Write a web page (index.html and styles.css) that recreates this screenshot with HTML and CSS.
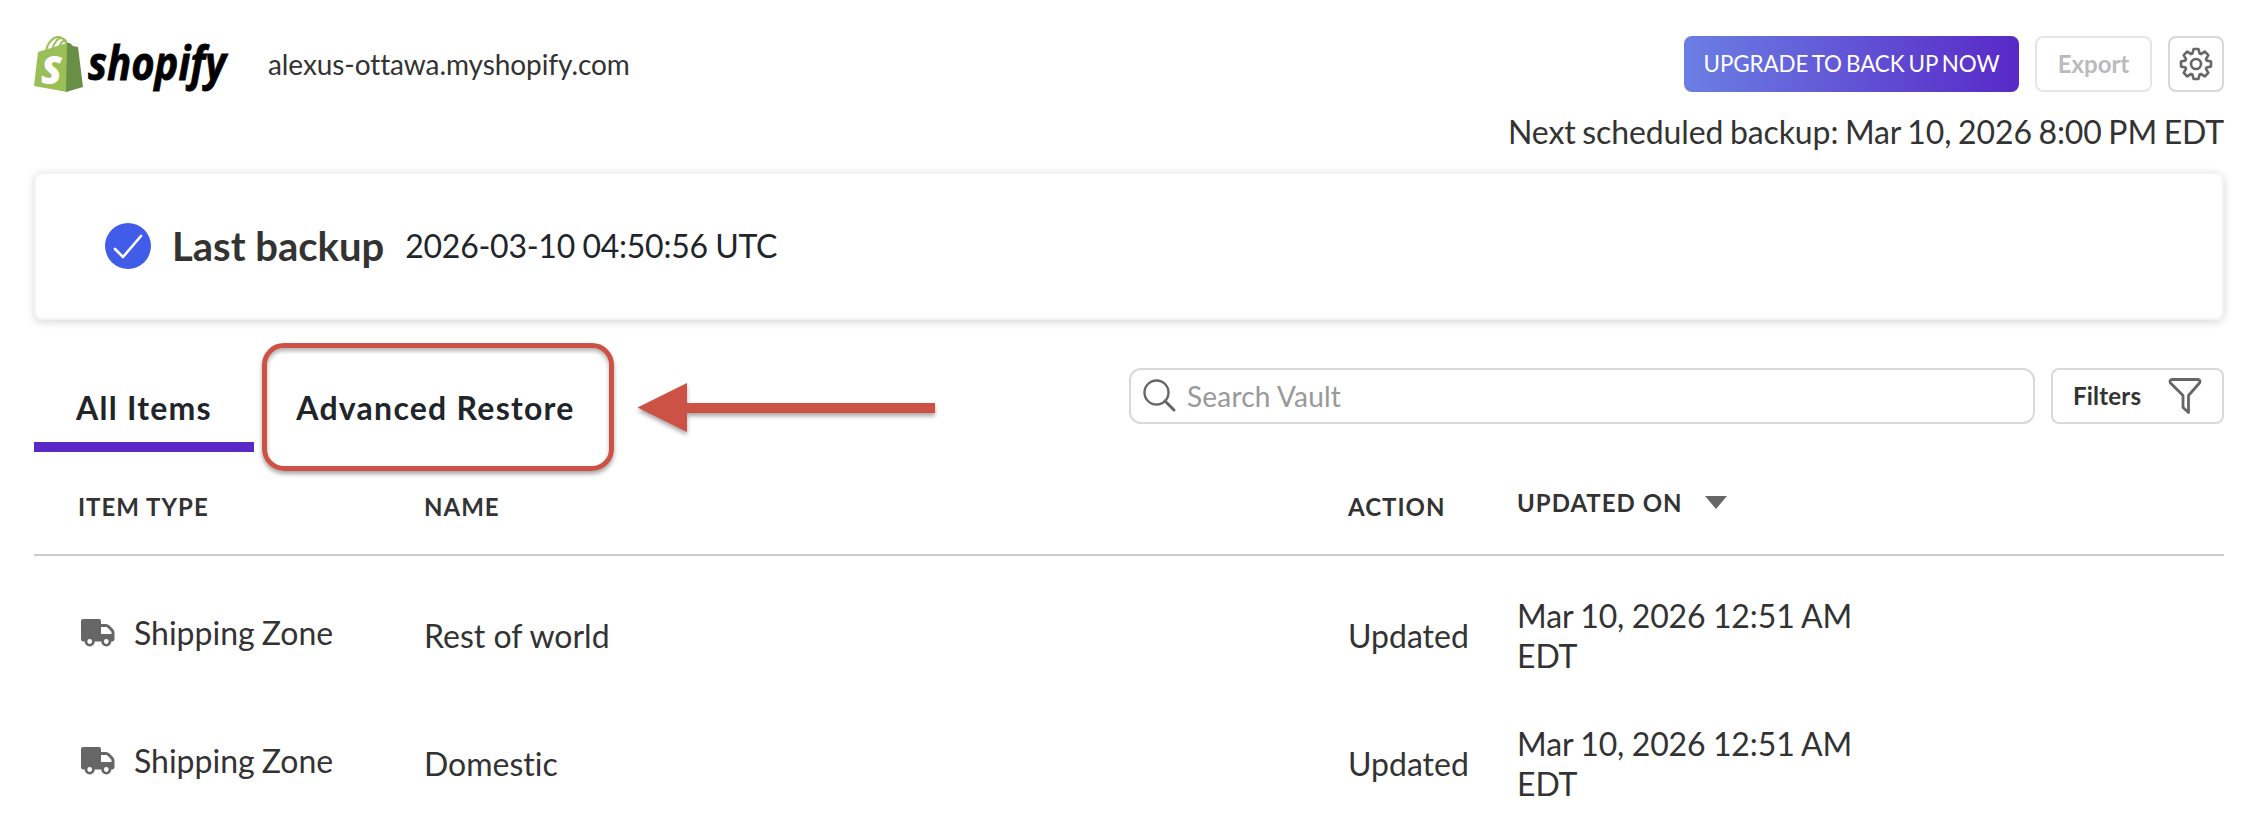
FILE: index.html
```html
<!DOCTYPE html>
<html lang="en">
<head>
	<meta charset="UTF-8">
	<title>Shopify Vault</title>
	<link rel="stylesheet" href="styles.css">
</head>
<body>
	<div class="header">
		<svg class="logo" width="196" height="60" viewBox="0 0 196 60">
			<path d="M12 18 C13 8 20 3 24 3 C29 3 32 8 33 12 M18 16 C19 10 24 4 27 4 C32 5 33 9 33 12 M25 14 C26 10 28 7 31 6" fill="none" stroke="#9abf56" stroke-width="2"/>
			<path d="M4 18 L33 9 V58 L0 52 Z" fill="#9abf56"/>
			<path d="M33 9 L36 9 L39 12 L44 13 L49 53 L32 58 Z" fill="#698f47"/>
			<text class="logo-s" x="7" y="50">S</text>
			<text class="logo-text" x="54" y="46" textLength="138" lengthAdjust="spacingAndGlyphs">shopify</text>
		</svg>
		<span class="domain">alexus-ottawa.myshopify.com</span>
		<div class="actions">
			<button class="btn upgrade">UPGRADE TO BACK UP NOW</button>
			<button class="btn export" disabled>Export</button>
			<button class="btn settings">
				<svg width="34" height="34" viewBox="0 0 34 34" fill="none" stroke="#666" stroke-width="2.6" stroke-linejoin="round">
					<path d="M14.6 2 L19.4 2 L20.6 6.5 L21.9 7 L25.9 4.7 L29.3 8.1 L27 12.1 L27.5 13.4 L32 14.6 L32 19.4 L27.5 20.6 L27 21.9 L29.3 25.9 L25.9 29.3 L21.9 27 L20.6 27.5 L19.4 32 L14.6 32 L13.4 27.5 L12.1 27 L8.1 29.3 L4.7 25.9 L7 21.9 L6.5 20.6 L2 19.4 L2 14.6 L6.5 13.4 L7 12.1 L4.7 8.1 L8.1 4.7 L12.1 7 L13.4 6.5 Z"/>
					<circle cx="17" cy="17" r="5"/>
				</svg>
			</button>
		</div>
	</div>
	<p class="next-backup">Next scheduled backup: Mar 10, 2026 8:00 PM EDT</p>

	<div class="card">
		<svg width="46" height="46" viewBox="0 0 46 46">
			<circle cx="23" cy="23" r="23" fill="#425cea"/>
			<path d="M10 26 L18 34 L36 13" fill="none" stroke="#fff" stroke-width="2.6" stroke-linecap="round" stroke-linejoin="round"/>
		</svg>
		<h2>Last backup</h2>
		<span class="date">2026-03-10 04:50:56 UTC</span>
	</div>

	<div class="toolbar">
		<div class="tabs">
			<a class="tab on">All Items</a>
			<a class="tab restore">Advanced Restore</a>
			<svg class="arrow" width="310" height="60" viewBox="0 0 310 60">
				<path d="M7.5 29.5 L57 5 V25 H305 V35 H57 V54 Z" fill="#cd5246"/>
			</svg>
		</div>
		<div class="search">
			<svg width="34" height="34" viewBox="0 0 34 34" fill="none" stroke="#666">
				<circle cx="13.5" cy="13.5" r="12" stroke-width="2.4"/>
				<path d="M22 22 L31 31" stroke-width="3" stroke-linecap="round"/>
			</svg>
			<span>Search Vault</span>
		</div>
		<button class="btn filters">
			<span>Filters</span>
			<svg width="34" height="38" viewBox="0 0 34 38" fill="none" stroke="#666" stroke-width="2.8" stroke-linejoin="round">
				<path d="M4 2.5 H30 Q33 3 31.5 6 L20.5 18.5 V35.5 L15 30.5 V18.5 L2.5 6 Q1 3 4 2.5 Z"/>
			</svg>
		</button>
	</div>

	<div class="row head">
		<span>ITEM TYPE</span>
		<span>NAME</span>
		<span>ACTION</span>
		<span class="sorted">UPDATED ON <i class="caret"></i></span>
	</div>
	<div class="row">
		<span class="type">
			<svg width="34" height="28" viewBox="0 0 34 28">
				<path d="M2 0 H18 Q20 0 20 2 V5 H25 Q27 5 28.5 6.5 L32 10 Q33.5 11.5 33.5 13.5 V20 Q33.5 22 31.5 22.5 H2 Q0 22 0 20 V2 Q0 0 2 0 Z" fill="#666"/>
				<path d="M20 8 H25 Q26 8 27 9 L30.5 13 V15 H20 Z" fill="#fff"/>
				<circle cx="8.7" cy="22.5" r="3.7" fill="#fff" stroke="#666" stroke-width="2.6"/>
				<circle cx="25.3" cy="22.5" r="3.7" fill="#fff" stroke="#666" stroke-width="2.6"/>
			</svg>
			Shipping Zone
		</span>
		<span>Rest of world</span>
		<span>Updated</span>
		<span class="time">Mar 10, 2026 12:51 AM<br>EDT</span>
	</div>
	<div class="row">
		<span class="type">
			<svg width="34" height="28" viewBox="0 0 34 28">
				<path d="M2 0 H18 Q20 0 20 2 V5 H25 Q27 5 28.5 6.5 L32 10 Q33.5 11.5 33.5 13.5 V20 Q33.5 22 31.5 22.5 H2 Q0 22 0 20 V2 Q0 0 2 0 Z" fill="#666"/>
				<path d="M20 8 H25 Q26 8 27 9 L30.5 13 V15 H20 Z" fill="#fff"/>
				<circle cx="8.7" cy="22.5" r="3.7" fill="#fff" stroke="#666" stroke-width="2.6"/>
				<circle cx="25.3" cy="22.5" r="3.7" fill="#fff" stroke="#666" stroke-width="2.6"/>
			</svg>
			Shipping Zone
		</span>
		<span>Domestic</span>
		<span>Updated</span>
		<span class="time">Mar 10, 2026 12:51 AM<br>EDT</span>
	</div>
</body>
</html>
```

FILE: styles.css
```css
*{box-sizing:border-box;}
body,h2,p{margin:0;padding:0;}
body{height:834px;padding:36px 36px 0 34px;overflow:hidden;background:#fff;color:#333;font:32px/40px Lato,sans-serif;font-variant-ligatures:none;}
svg{display:block;flex:none;overflow:visible;}
.btn{height:56px;padding:0;border:2px solid #d9d9d9;border-radius:8px;background:#fff;color:#333;font:bold 24px/30px Lato,sans-serif;}

.header{display:flex;align-items:center;height:56px;}
.logo-text{font:italic bold 46px/50px "Open Sans",sans-serif;fill:#000;stroke:#000;stroke-width:.8px;}
.logo-s{font:italic 800 38px/40px "Open Sans",sans-serif;fill:#fff;}
.domain{margin-left:38px;font-size:28px;letter-spacing:-.08px;}
.actions{display:flex;gap:16px;margin-left:auto;}
.upgrade{width:335px;border:0;background:linear-gradient(90deg,#6b7fe3,#5829c7);color:#fff;font-size:22.4px;font-weight:normal;letter-spacing:-.1px;word-spacing:-1.5px;}
.export{width:117px;border-color:#e5e5e5;color:#bbb;}
.settings{display:flex;align-items:center;justify-content:center;width:56px;}
.next-backup{margin-top:20px;text-align:right;letter-spacing:-.1px;word-spacing:-1.5px;}

.card{display:flex;align-items:center;height:148px;margin-top:20px;padding-left:69px;border:2px solid #f3f3f3;border-radius:8px;box-shadow:0 2px 8px rgba(0,0,0,.16);}
.card h2{margin-left:21px;font-size:40px;}
.card .date{margin-left:21px;color:#212529;letter-spacing:-.25px;word-spacing:-.5px;}

.toolbar{display:flex;height:128px;margin-top:23px;}
.tabs{display:flex;width:1095px;}
.tab{color:#212529;font-weight:bold;letter-spacing:1.25px;}
.tab.on{width:220px;height:109px;padding-top:45px;border-bottom:10px solid #5829c7;text-align:center;}
.tab.restore{width:352px;margin-left:8px;padding:40px 5px 0 0;border:5px solid #cd5246;border-radius:22px;text-align:center;box-shadow:0 3px 4px rgba(0,0,0,.35),inset 0 3px 4px rgba(0,0,0,.3);}
.arrow{margin:35px 0 0 16px;filter:drop-shadow(0 3px 2px rgba(0,0,0,.35));}
.search{display:flex;align-items:center;width:906px;height:56px;margin-top:25px;padding-left:12px;border:2px solid #d9d9d9;border-radius:12px;color:#999;font-size:28px;letter-spacing:.2px;}
.search span{margin-left:10px;}
.filters{display:flex;align-items:center;justify-content:space-between;width:173px;margin:25px 0 0 16px;padding:0 20px;letter-spacing:.2px;}

.row{display:grid;grid-template-columns:346px 924px 169px 1fr;align-items:center;height:128px;padding:0 0 0 44px;}
.head{height:85px;margin-bottom:16px;padding-bottom:12px;border-bottom:2px solid #ccc;font-size:24px;font-weight:bold;letter-spacing:1px;}
.sorted{display:flex;align-items:center;margin-top:-8px;}
.caret{margin-left:22px;border:11px solid transparent;border-top:13px solid #666;border-bottom:0;}
.type{display:flex;align-items:center;gap:19px;margin:-6px 0 0 3px;word-spacing:-1px;}
.time{letter-spacing:-.1px;word-spacing:-.7px;}
```
